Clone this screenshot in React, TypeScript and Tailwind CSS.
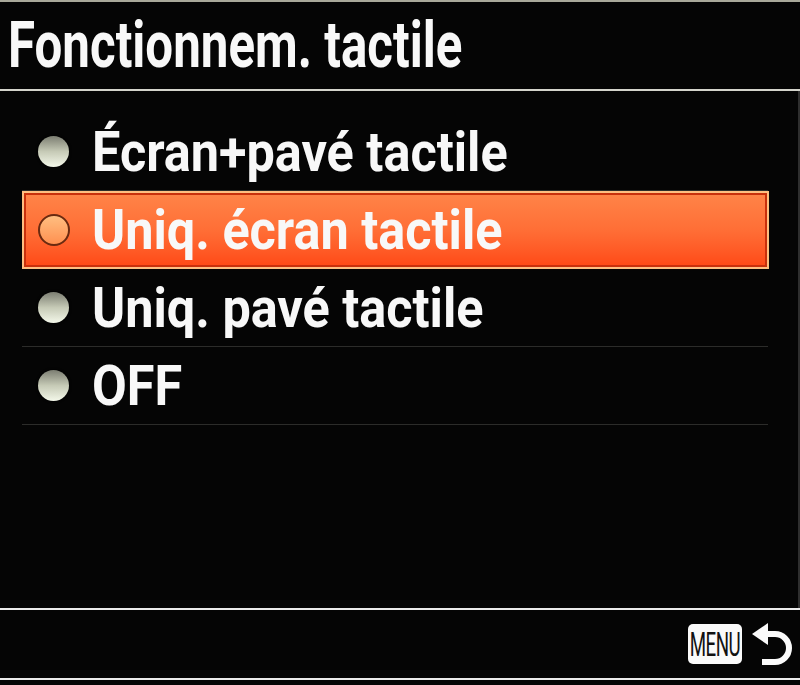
const items = [
  { label: 'Écran+pavé tactile', selected: false },
  { label: 'Uniq. écran tactile', selected: true },
  { label: 'Uniq. pavé tactile', selected: false },
  { label: 'OFF', selected: false },
]

function Bullet({ selected }: { selected: boolean }) {
  if (selected) {
    return (
      <span className="block w-[32px] h-[32px] rounded-full border-2 border-[#6a2a10] bg-gradient-to-b from-[#ffbe80] to-[#ff9050]" />
    )
  }
  return (
    <span className="block w-[31px] h-[31px] rounded-full bg-gradient-to-b from-[#7c7e72] via-[#c6cab6] to-[#f4f8ea] shadow-[0_0_2px_1px_rgba(0,0,0,0.8)]" />
  )
}

function ReturnArrow() {
  return (
    <svg width="44" height="48" viewBox="0 0 44 48" className="block">
      <path d="M2 14 L18 3 L18 25 Z" fill="#fafafa" />
      <path d="M16 14 H25 A14 14 0 0 1 25 42 H12" fill="none" stroke="#fafafa" strokeWidth={6} />
    </svg>
  )
}

export default function App() {
  return (
    <div className="w-[800px] h-[685px] bg-[#050505] flex flex-col overflow-hidden font-['Roboto','Liberation_Sans',sans-serif] text-[#f8f8f8]">
      <div className="h-[2px] bg-[#a8a89a]" />

      {/* Title */}
      <div className="h-[87px] flex items-center pl-[8px]">
        <h1 className="inline-block origin-left scale-x-[0.77] text-[64px] leading-none font-bold whitespace-nowrap">
          Fonctionnem. tactile
        </h1>
      </div>
      <div className="h-[2px] bg-[#d4d4cc]" />

      {/* Options */}
      <div className="pt-[22px] border-r-2 border-[#2e2e2e] flex-1 flex flex-col">
        {items.map((item) =>
          item.selected ? (
            <div
              key={item.label}
              className="h-[78px] ml-[22px] mr-[29px] flex items-center border-2 border-[#ffbe80] bg-gradient-to-b from-[#ff8448] via-[#ff6e36] to-[#ff4814] shadow-[inset_0_0_0_2px_#c8300c]"
            >
              <div className="pl-[14px] w-[68px] shrink-0">
                <Bullet selected />
              </div>
              <span className="inline-block origin-left scale-x-[0.9] text-[56px] leading-none font-bold whitespace-nowrap">
                {item.label}
              </span>
            </div>
          ) : (
            <div key={item.label} className="h-[78px] ml-[22px] mr-[30px] flex items-center border-b border-[#2c2c2a]">
              <div className="pl-[16px] w-[70px] shrink-0">
                <Bullet selected={false} />
              </div>
              <span className="inline-block origin-left scale-x-[0.9] text-[56px] leading-none font-bold whitespace-nowrap">
                {item.label}
              </span>
            </div>
          )
        )}
      </div>

      {/* Footer */}
      <div className="h-[2px] bg-[#ececec]" />
      <div className="h-[68px] flex items-center justify-end gap-[8px] pr-[6px]">
        <div className="w-[54px] h-[40px] rounded-[5px] bg-[#fafafa] flex items-center justify-center overflow-hidden">
          <span className="inline-block scale-x-[0.55] text-[34px] leading-none text-[#111] tracking-tight">MENU</span>
        </div>
        <ReturnArrow />
      </div>
      <div className="h-[2px] bg-[#ececec]" />
      <div className="flex-none h-[5px]" />
    </div>
  )
}
